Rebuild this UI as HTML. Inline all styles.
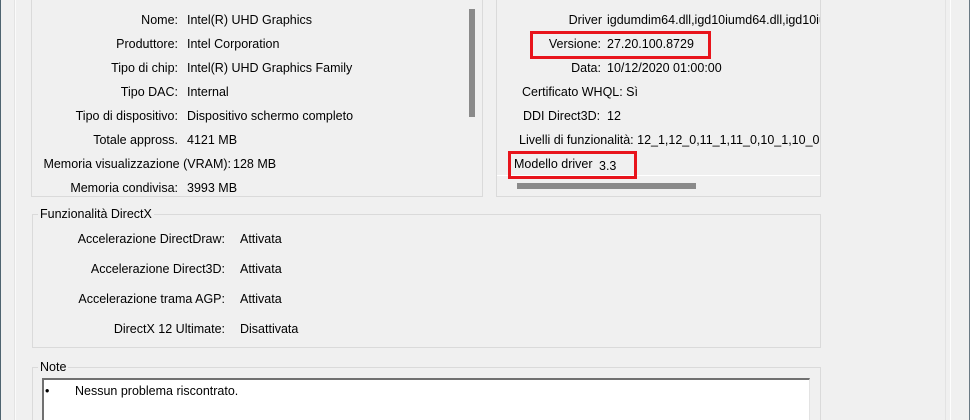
<!DOCTYPE html>
<html><head><meta charset="utf-8"><style>
*{margin:0;padding:0;box-sizing:border-box}
html,body{width:970px;height:420px;overflow:hidden}
body{background:#f0f0f0;position:relative;font-family:"Liberation Sans",Tahoma,sans-serif;font-size:12.5px;color:#000}
.a{position:absolute;white-space:nowrap;line-height:14px}
.r{text-align:right}
.v{position:absolute;background:#fff;width:1px}
</style></head><body>
<div style="position:absolute;left:0;top:0;width:1px;height:420px;background:#4f6470"></div>
<div class="v" style="left:15px;top:0;height:420px;background:#fafafa"></div>
<div style="position:absolute;left:14px;top:0;width:1px;height:420px;background:#e3e3e3"></div>
<div style="position:absolute;left:945px;top:0;width:1px;height:420px;background:#e3e3e3"></div>
<div class="v" style="left:950px;top:0;height:420px;background:#fdfdfd"></div>
<div style="position:absolute;left:969px;top:0;width:1px;height:420px;background:#6a7a84"></div>

<!-- top left box -->
<div style="position:absolute;left:31px;top:-2px;width:452px;height:199px;border:1px solid #dadada;border-top:none"></div>
<div style="position:absolute;left:469px;top:9px;width:6px;height:108px;background:#8a8a8a"></div>
<div class="a r" style="right:792px;top:13px">Nome:</div><div class="a" style="left:187px;top:13px">Intel(R) UHD Graphics</div>
<div class="a r" style="right:792px;top:37px">Produttore:</div><div class="a" style="left:187px;top:37px">Intel Corporation</div>
<div class="a r" style="right:792px;top:61px">Tipo di chip:</div><div class="a" style="left:187px;top:61px">Intel(R) UHD Graphics Family</div>
<div class="a r" style="right:792px;top:85px">Tipo DAC:</div><div class="a" style="left:187px;top:85px">Internal</div>
<div class="a r" style="right:792px;top:109px">Tipo di dispositivo:</div><div class="a" style="left:187px;top:109px">Dispositivo schermo completo</div>
<div class="a r" style="right:792px;top:133px">Totale appross.</div><div class="a" style="left:187px;top:133px">4121 MB</div>
<div class="a r" style="right:739px;top:157px">Memoria visualizzazione (VRAM):</div><div class="a" style="left:233px;top:157px">128 MB</div>
<div class="a r" style="right:792px;top:181px">Memoria condivisa:</div><div class="a" style="left:187px;top:181px">3993 MB</div>

<!-- top right box -->
<div style="position:absolute;left:496px;top:-2px;width:325px;height:199px;border:1px solid #dadada;border-top:none"></div>
<div style="position:absolute;left:497px;top:175px;width:323px;height:1px;background:#fff"></div>
<div style="position:absolute;left:517px;top:183px;width:179px;height:6px;background:#8a8a8a"></div>
<div style="position:absolute;left:497px;top:0;width:323px;height:175px;overflow:hidden">
<div class="a r" style="right:218px;top:13px">Driver</div><div class="a" style="left:110px;top:13px">igdumdim64.dll,igd10iumd64.dll,igd10iumd64.dll</div>
<div class="a r" style="right:219px;top:37px">Versione:</div><div class="a" style="left:110px;top:37px">27.20.100.8729</div>
<div class="a r" style="right:219px;top:61px">Data:</div><div class="a" style="left:110px;top:61px">10/12/2020 01:00:00</div>
<div class="a" style="left:25px;top:85px">Certificato WHQL: Sì</div>
<div class="a" style="left:26px;top:109px">DDI Direct3D:</div><div class="a" style="left:110px;top:109px">12</div>
<div class="a" style="left:22px;top:133px">Livelli di funzionalità: 12_1,12_0,11_1,11_0,10_1,10_0</div>
<div class="a" style="left:17px;top:157px">Modello driver</div><div class="a" style="left:102px;top:159px">3.3</div>
</div>
<div style="position:absolute;left:530px;top:31px;width:181px;height:28px;border:3px solid #e8141c"></div>
<div style="position:absolute;left:508px;top:151px;width:129px;height:28px;border:3px solid #e8141c"></div>

<!-- DirectX -->
<div style="position:absolute;left:32px;top:214px;width:789px;height:134px;border:1px solid #dadada"></div>
<div class="a" style="left:38px;top:207px;background:#f0f0f0;padding:0 2px">Funzionalità DirectX</div>
<div class="a r" style="right:745px;top:232px">Accelerazione DirectDraw:</div><div class="a" style="left:240px;top:232px">Attivata</div>
<div class="a r" style="right:745px;top:262px">Accelerazione Direct3D:</div><div class="a" style="left:240px;top:262px">Attivata</div>
<div class="a r" style="right:745px;top:292px">Accelerazione trama AGP:</div><div class="a" style="left:240px;top:292px">Attivata</div>
<div class="a r" style="right:745px;top:322px">DirectX 12 Ultimate:</div><div class="a" style="left:240px;top:322px">Disattivata</div>

<!-- Note -->
<div style="position:absolute;left:32px;top:367px;width:789px;height:60px;border:1px solid #dadada"></div>
<div class="a" style="left:38px;top:360px;background:#f0f0f0;padding:0 2px">Note</div>
<div style="position:absolute;left:42px;top:378px;width:768px;height:50px;background:#fff;border-top:2px solid #707070;border-left:2px solid #707070;border-right:1px solid #e3e3e3"></div>
<div class="a" style="left:45px;top:384px">•</div>
<div class="a" style="left:75px;top:384px">Nessun problema riscontrato.</div>
</body></html>
